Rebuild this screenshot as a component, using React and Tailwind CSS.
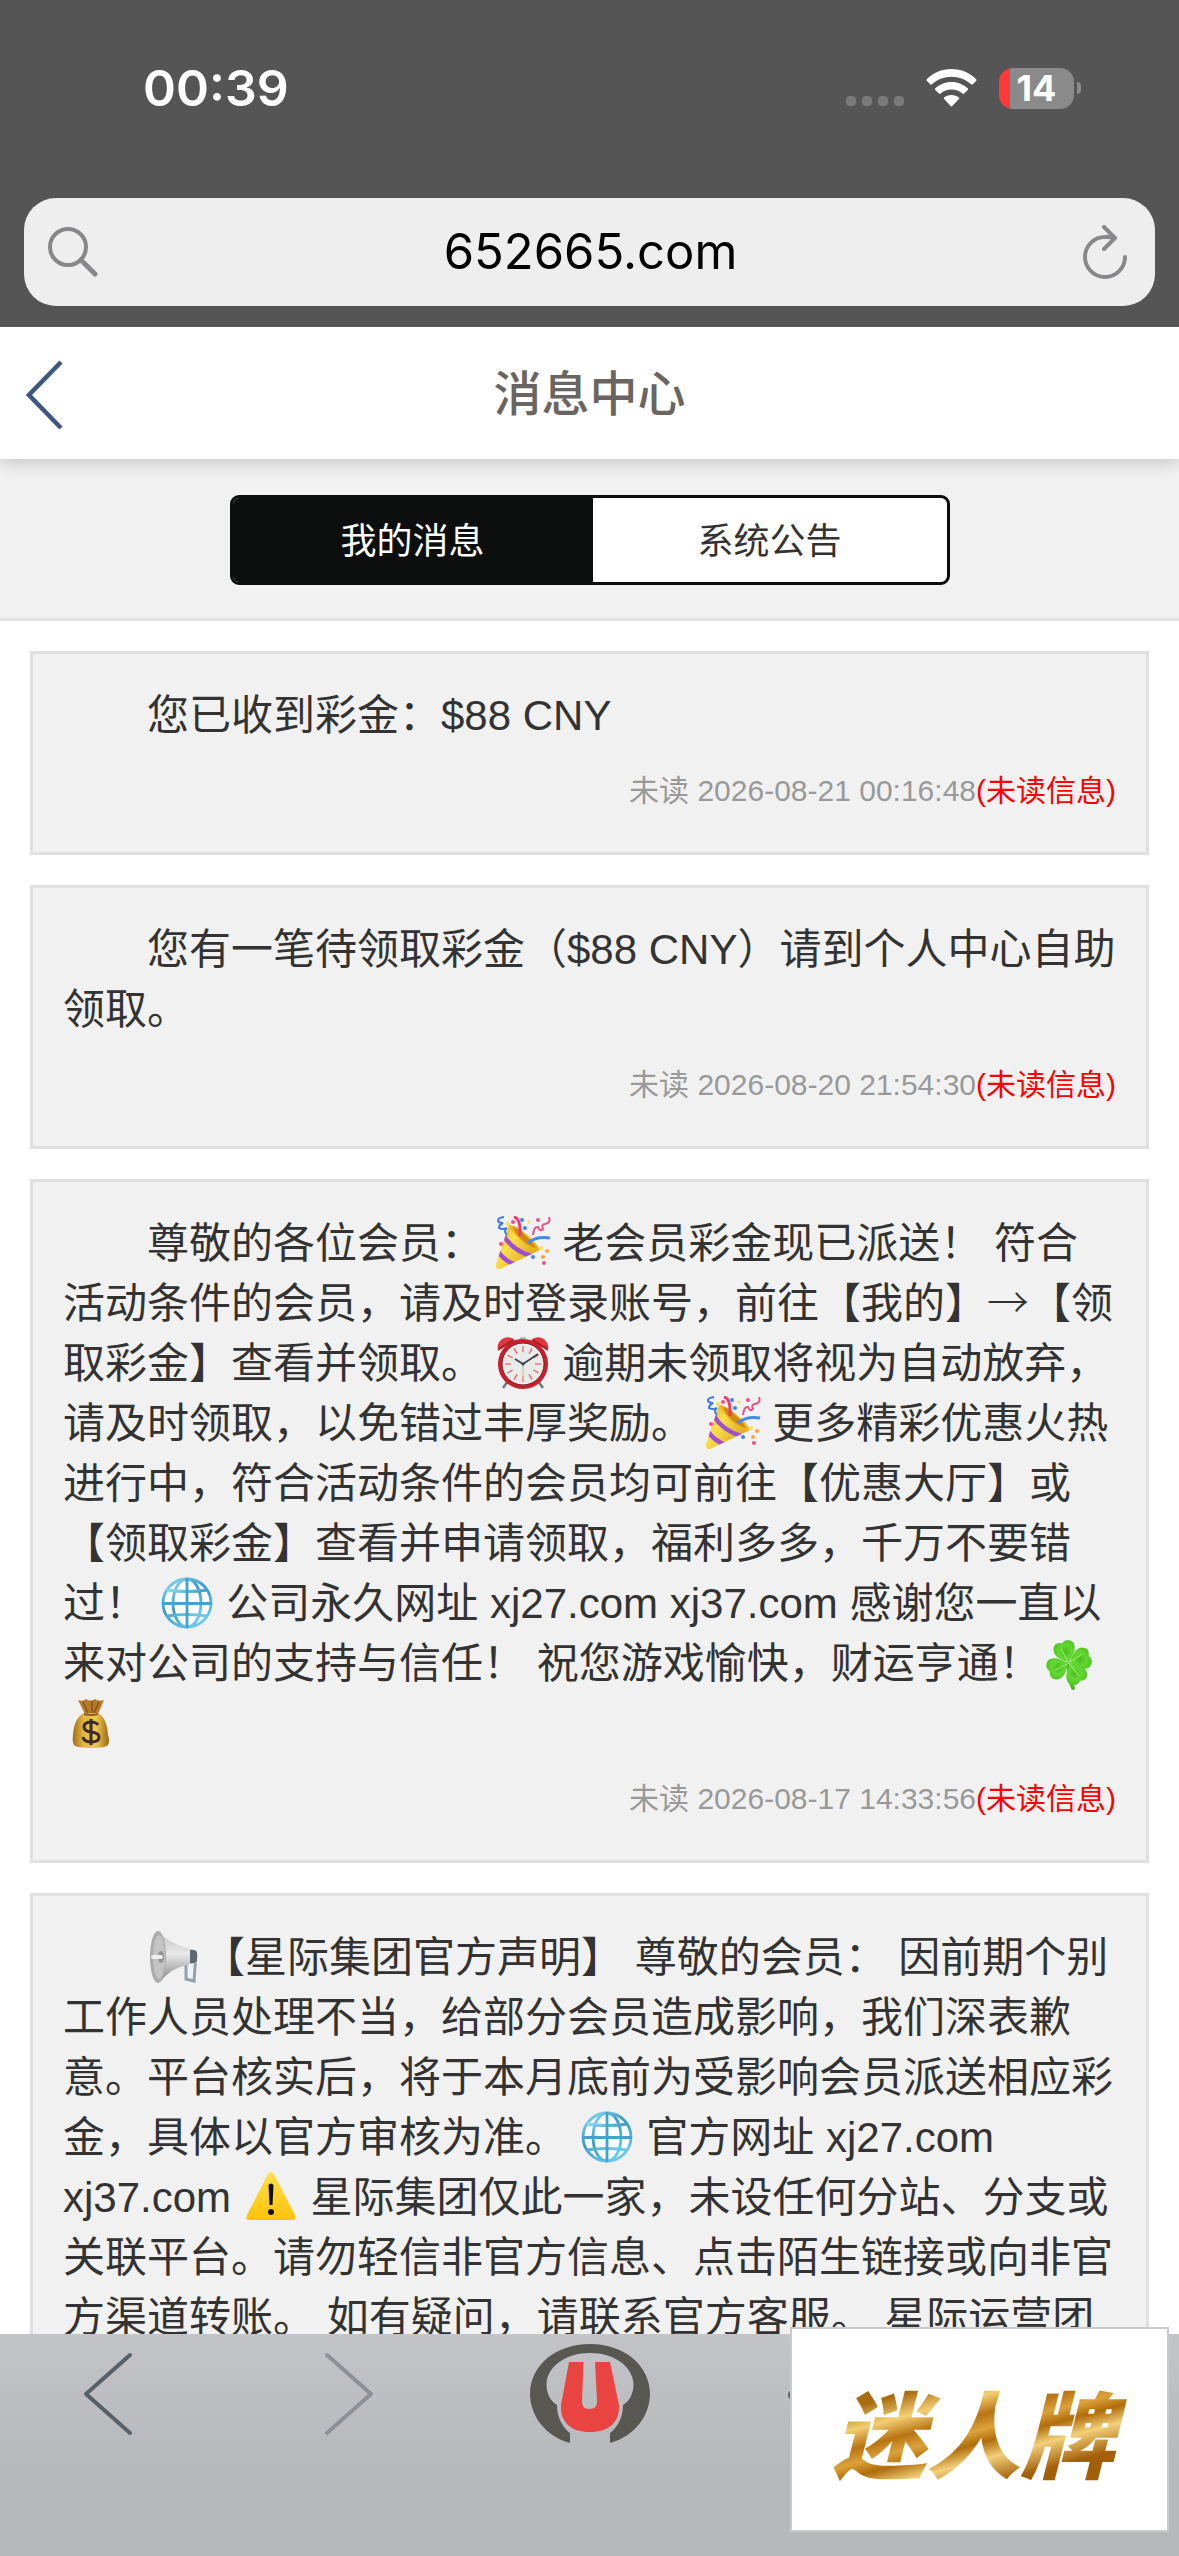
const emojiBox = "inline-block h-[54px] w-[56px] align-[-12px]";

function Emoji({ label, children }) {
  return (
    <svg viewBox="0 0 56 54" className={emojiBox} role="img" aria-label={label}>
      {children}
    </svg>
  );
}

function Party() {
  return (
    <Emoji label="庆祝">
      <defs>
        <linearGradient id="cone" x1="0" y1="0" x2="1" y2="0.7">
          <stop offset="0" stopColor="#d99a12" />
          <stop offset="0.4" stopColor="#fbe04e" />
          <stop offset="1" stopColor="#d99f14" />
        </linearGradient>
        <clipPath id="coneClip">
          <path d="M14 9 1 48Q0 54 5 53L45 34Q31 29 14 9Z" />
        </clipPath>
      </defs>
      <path d="M14 9 1 48Q0 54 5 53L45 34Q31 29 14 9Z" fill="url(#cone)" />
      <g clipPath="url(#coneClip)" fill="none" stroke="#a04fd0" strokeWidth="4.5">
        <path d="M9 20Q17 34 36 40" />
        <path d="M2 34Q9 45 21 49" />
      </g>
      <path d="M14 9Q20 8 32 19 45 30 44 34 38 37 27 26 15 14 14 9Z" fill="#eeb521" />
      <path d="M18 11Q24 12 31 20 39 27 41 32 35 31 27 24 20 17 18 11Z" fill="#cf8a12" />
      <path d="M19 1Q26 2 25 20" fill="none" stroke="#ef3b68" strokeWidth="3" />
      <path d="M33 27Q41 20 55 22" fill="none" stroke="#4589ee" strokeWidth="3" />
      <path d="M9 1Q2 2 3 5 4 7 8 7 4 9 4 12 8 14 12 12 8 15 12 19" fill="none" stroke="#3d78ea" strokeWidth="2" />
      <path d="M54 1Q56 7 50 8 46 8 48 13 45 16 43 11 39 10 38 19" fill="none" stroke="#ee4f83" strokeWidth="2" />
      <g fill="#3f86ee">
        <circle cx="27" cy="4" r="2" /><circle cx="30" cy="12" r="2" /><circle cx="38" cy="41" r="2" />
      </g>
      <g fill="#f0508c">
        <circle cx="43" cy="4" r="2" /><circle cx="6" cy="28" r="2" /><circle cx="49" cy="47" r="2" /><circle cx="18" cy="6" r="2" />
      </g>
      <g fill="#f9a43f">
        <circle cx="48" cy="41" r="2" /><circle cx="52" cy="35" r="2" />
      </g>
      <g fill="#fce04a">
        <circle cx="13" cy="8" r="2" /><circle cx="46" cy="32" r="2" /><circle cx="34" cy="6" r="1.5" />
      </g>
    </Emoji>
  );
}

function Alarm() {
  return (
    <Emoji label="闹钟">
      <path d="M13 45 8 52M43 45 48 52" stroke="#6d7a80" strokeWidth="2.5" />
      <rect x="25" y="1" width="6" height="4" fill="#b3bec4" />
      <path d="M3 15Q1 6 9 2 16 0 20 4Z" fill="#e0373f" />
      <path d="M53 15Q55 6 47 2 40 0 36 4Z" fill="#e0373f" />
      <path d="M4 13 18 4M52 13 38 4" stroke="#a51a26" strokeWidth="1.5" />
      <path d="M11 12 15 15M45 12 41 15" stroke="#7a1c22" strokeWidth="3" />
      <circle cx="28" cy="28" r="23" fill="#e9ebeb" stroke="#c5202b" strokeWidth="4" />
      <circle cx="28" cy="28" r="21" fill="none" stroke="#8e1a22" strokeWidth="1" />
      <g stroke="#f0595c" strokeWidth="1.2">
        {[0, 30, 60, 90, 120, 150, 180, 210, 240, 270, 300, 330].map((a) => (
          <path key={a} d="M28 10V16" transform={`rotate(${a} 28 28)`} />
        ))}
      </g>
      <path d="M28 28V43" stroke="#d9b77a" strokeWidth="1" />
      <path d="M20 23 28 28 43 18" fill="none" stroke="#39424a" strokeWidth="1.8" />
      <circle cx="28" cy="28" r="1.5" fill="#39424a" />
    </Emoji>
  );
}

function Globe() {
  return (
    <Emoji label="网站">
      <defs>
        <linearGradient id="globe" x1="0" y1="0" x2="0.6" y2="1">
          <stop offset="0" stopColor="#8fdcf5" />
          <stop offset="0.5" stopColor="#3798c4" />
          <stop offset="1" stopColor="#6cc7ea" />
        </linearGradient>
      </defs>
      <circle cx="28" cy="27" r="24.5" fill="#fbfdfe" />
      <g fill="none" stroke="url(#globe)" strokeWidth="2.8">
        <circle cx="28" cy="27" r="24" />
        <ellipse cx="28" cy="27" rx="14" ry="24" />
        <path d="M8 14Q28 17 48 14M8 40Q28 37 48 40" />
      </g>
      <path d="M28 2V52M3 27.5H53" stroke="#43a3ce" strokeWidth="2.8" />
    </Emoji>
  );
}

function Clover() {
  return (
    <Emoji label="四叶草">
      <defs>
        <radialGradient id="leaf">
          <stop offset="0" stopColor="#4aba1f" />
          <stop offset="0.6" stopColor="#62d833" />
          <stop offset="1" stopColor="#55c924" />
        </radialGradient>
      </defs>
      <path d="M28 27Q27 41 32 52" fill="none" stroke="#52b526" strokeWidth="4" strokeLinecap="round" />
      <g fill="url(#leaf)">
        {[-28, 62, 140, 238].map((a) => (
          <g key={a} transform={`rotate(${a} 28 27)`}>
            <path d="M28 26Q15 17 18 9 21 2 28 6 35 2 39 9 41 17 28 26Z" transform="rotate(8 28 27)" />
          </g>
        ))}
      </g>
      <path d="M28 27 20 13M28 27 41 18M28 27 38 40M28 27 14 34" stroke="#8ce95c" strokeWidth="1.3" />
    </Emoji>
  );
}

function MoneyBag() {
  return (
    <Emoji label="钱袋">
      <defs>
        <linearGradient id="bag">
          <stop offset="0" stopColor="#a36c1b" />
          <stop offset="0.3" stopColor="#e3b63f" />
          <stop offset="0.65" stopColor="#edc850" />
          <stop offset="1" stopColor="#9c6717" />
        </linearGradient>
      </defs>
      <path d="M15 4Q20 6 23 3 27 6 32 3 36 6 41 4L35 18H22Z" fill="#b57a2b" />
      <path d="M20 6 25 17M29 5V17M36 6 31 17" stroke="#7d4d15" strokeWidth="1.2" />
      <path d="M21 17Q11 22 10 39 9 45 11 49 13 52 28 52 43 52 45 49 47 45 45 39 44 22 35 17Z" fill="url(#bag)" />
      <path d="M21 18Q28 20 35 18" fill="none" stroke="#8d5b1c" strokeWidth="2" />
      <path d="M35 29Q33 26 28 26 21 26 21 31 21 35 28 36 36 37 36 41 36 46 28 46 21 46 20 41M28 23V49" fill="none" stroke="#3a2d26" strokeWidth="3" />
    </Emoji>
  );
}

function Loudspeaker() {
  return (
    <Emoji label="公告">
      <defs>
        <linearGradient id="horn" x1="0" y1="0" x2="0" y2="1">
          <stop offset="0" stopColor="#bdbdbd" />
          <stop offset="0.45" stopColor="#e9e9e9" />
          <stop offset="1" stopColor="#858585" />
        </linearGradient>
      </defs>
      <path d="M39 22V49L47 51 49 24" fill="none" stroke="#8ea3b1" strokeWidth="3" />
      <path d="M10 1Q20 12 40 18L50 21V32L40 35Q24 38 13 52Z" fill="url(#horn)" />
      <path d="M43 20Q48 19 50 22V31Q47 34 43 33Z" fill="#596873" />
      <ellipse cx="11" cy="27" rx="8" ry="26" fill="#aaabab" />
      <ellipse cx="12" cy="27" rx="6" ry="22" fill="#c4c4c4" />
      <ellipse cx="14" cy="27" rx="3" ry="6" fill="#929292" />
      <path d="M6 27H14" stroke="#eeeeee" strokeWidth="4" strokeLinecap="round" />
    </Emoji>
  );
}

function Warning() {
  return (
    <Emoji label="警告">
      <defs>
        <linearGradient id="warn" x1="0" y1="0" x2="0" y2="1">
          <stop offset="0" stopColor="#ffe04a" />
          <stop offset="1" stopColor="#ffc20a" />
        </linearGradient>
      </defs>
      <path d="M25 4Q28 0 31 4L52 45Q54 50 50 50H6Q2 50 4 45Z" fill="url(#warn)" />
      <path d="M25.5 15Q28 12 30.500 15L29.500 35H26.500Z" fill="#111" />
      <circle cx="28" cy="42" r="3" fill="#111" />
    </Emoji>
  );
}

function Message({ time, children }) {
  return (
    <article className="border-[3px] border-[#e0e0e0] bg-[#f1f1f1] px-[30px] pt-8 pb-[31px] text-[#333]">
      <p className="indent-[84px] text-[42px] leading-[60px]">{children}</p>
      {time && (
        <p className="mt-[15px] text-right text-[30px] leading-[60px] text-[#999]">
          未读 <time>{time}</time>
          <span className="text-[#f00]">(未读信息)</span>
        </p>
      )}
    </article>
  );
}

function StatusBar() {
  return (
    <div className="flex h-[198px] items-start justify-between pt-[58px] pr-[98px] pl-[143px] font-['Inter',sans-serif] font-semibold text-white">
      <span className="text-[50px] leading-[60px]">00:39</span>
      <div className="flex h-[60px] items-center">
        <div className="mt-[26px] mr-[22px] flex gap-[6px]">
          <i className="size-[10px] rounded-[4px] bg-[#7a7a7a]" />
          <i className="size-[10px] rounded-[4px] bg-[#7a7a7a]" />
          <i className="size-[10px] rounded-[4px] bg-[#7a7a7a]" />
          <i className="size-[10px] rounded-[4px] bg-[#7a7a7a]" />
        </div>
        <svg viewBox="0 0 51 38" className="mr-[22px] h-[38px] w-[51px]" fill="#fff" aria-label="Wi-Fi">
          <path d="M25.500 0C15.500 0 7 4 .8 10.200q-.8.800 0 1.600l3.400 3.500q.8.800 1.600 0C11 10.500 18 7.700 25.500 7.700s14.500 2.800 19.700 7.600q.8.800 1.600 0l3.400-3.500q.8-.8 0-1.600C44 4 35.500 0 25.500 0Z" />
          <path d="M25.500 13C19 13 13.500 15.500 9.300 19.300q-.8.800 0 1.600l3.600 3.700q.8.800 1.600 0c3-2.600 6.800-4 11-4s8 1.400 11 4q.8.800 1.600 0l3.600-3.700q.8-.8 0-1.600C37.500 15.500 32 13 25.500 13Z" />
          <path d="M25.500 26c-3 0-5.500 1-7.400 2.500q-.9.800 0 1.600l6.600 7q.8.800 1.600 0l6.600-7q.9-.8 0-1.600C31 27 28.500 26 25.500 26Z" />
        </svg>
        <div className="flex h-[41px] w-[75px] items-center justify-center rounded-[14px] bg-[linear-gradient(90deg,#ff383c_11px,#8a8a8a_11px)] text-[36px] leading-[41px] font-bold">
          14
        </div>
        <i className="ml-[3px] h-3 w-1 rounded-r-full bg-[#8a8a8a]" />
      </div>
    </div>
  );
}

function AddressBar() {
  return (
    <form className="mx-6 flex h-[108px] items-center justify-between rounded-[32px] bg-[#eee] px-6 text-[#88888b]" onSubmit={(e) => e.preventDefault()}>
      <svg viewBox="0 0 50 50" className="size-[50px]" fill="none" stroke="currentColor" strokeWidth="4" aria-hidden="true">
        <circle cx="20" cy="20" r="18" />
        <path d="m33 33 14 14" strokeWidth="5" strokeLinecap="round" />
      </svg>
      <input
        aria-label="网址"
        defaultValue="652665.com"
        className="min-w-0 flex-1 bg-transparent text-center font-['Inter',sans-serif] text-[49px] leading-[60px] text-black outline-none"
      />
      <button type="button" aria-label="刷新" className="mr-1">
        <svg viewBox="0 0 44 54" className="h-[54px] w-[44px]" fill="none" stroke="currentColor" strokeWidth="4" strokeLinecap="round" strokeLinejoin="round">
          <path d="M42 32A20 20 0 1 1 22 12Q27 11.500 31 13" />
          <path d="M21 2 32 13 21 24" />
        </svg>
      </button>
    </form>
  );
}

export default function App() {
  return (
    <div className="flex h-screen flex-col overflow-hidden bg-white font-['Liberation_Sans','Noto_Sans_CJK_SC',sans-serif]" lang="zh-CN">
      <header className="relative z-20 shrink-0 bg-[#555] pb-[21px]">
        <StatusBar />
        <AddressBar />
      </header>

      <nav className="relative z-10 grid h-[132px] shrink-0 grid-cols-[1fr_auto_1fr] items-center bg-white px-[26px] pt-1 shadow-[0_2px_18px_rgba(0,0,0,0.22)]">
        <button type="button" aria-label="返回" className="justify-self-start">
          <svg viewBox="0 0 38 70" className="h-[70px] w-[38px]" fill="none" stroke="#3f5681" strokeWidth="4.500">
            <path d="M35 2 3 35 35 68" />
          </svg>
        </button>
        <h1 className="text-[48px] font-medium leading-[60px] text-[#6a6463]">消息中心</h1>
      </nav>

      <div className="flex shrink-0 justify-center border-b-[3px] border-[#e3e3e3] bg-[#f1f1f1] pt-9 pb-[33px]">
        <div className="flex h-[90px] w-[720px] overflow-hidden rounded-[9px] border-[3px] border-[#0d0f0e] bg-white text-[36px]">
          <button type="button" className="w-[360px] bg-[#0d0f0e] pt-[3px] text-white">我的消息</button>
          <button type="button" className="flex-1 pt-[3px] text-[#333]">系统公告</button>
        </div>
      </div>

      <main className="flex min-h-0 flex-1 flex-col gap-[30px] overflow-hidden px-[30px] pt-[30px] *:shrink-0">
        <Message time="2026-08-21 00:16:48">您已收到彩金：$88 CNY</Message>
        <Message time="2026-08-20 21:54:30">您有一笔待领取彩金（$88 CNY）请到个人中心自助领取。</Message>
        <Message time="2026-08-17 14:33:56">
          尊敬的各位会员： <Party /> 老会员彩金现已派送！ 符合活动条件的会员，请及时登录账号，前往【我的】
          <span className="font-['Noto_Sans_CJK_SC',sans-serif] leading-none font-light">→</span>【领取彩金】查看并领取。 <Alarm />{" "}
          逾期未领取将视为自动放弃，请及时领取，以免错过丰厚奖励。 <Party />{" "}
          更多精彩优惠火热进行中，符合活动条件的会员均可前往【优惠大厅】或【领取彩金】查看并申请领取，福利多多，千万不要错过！ <Globe />{" "}
          公司永久网址 xj27.com xj37.com 感谢您一直以来对公司的支持与信任！ 祝您游戏愉快，财运亨通！<Clover /><MoneyBag />
        </Message>
        <Message>
          <Loudspeaker />【星际集团官方声明】 尊敬的会员： 因前期个别工作人员处理不当，给部分会员造成影响，我们深表歉意。平台核实后，将于本月底前为受影响会员派送相应彩金，具体以官方审核为准。 <Globe />{" "}
          官方网址 xj27.com xj37.com <Warning />{" "}
          星际集团仅此一家，未设任何分站、分支或关联平台。请勿轻信非官方信息、点击陌生链接或向非官方渠道转账。 如有疑问，请联系官方客服。 星际运营团
        </Message>
      </main>

      <footer className="relative h-[222px] shrink-0 bg-gradient-to-b from-[#c3c4c8] to-[#b7b8bc] to-60%">
        <div className="-mx-[13px] grid grid-cols-5 items-start justify-items-center">
          <button type="button" aria-label="后退" className="mt-[18px]">
            <svg viewBox="0 0 50 84" className="h-[84px] w-[50px]" fill="none" stroke="#566169" strokeWidth="4" strokeLinecap="round" strokeLinejoin="round">
              <path d="M47 3 3 42 47 81" />
            </svg>
          </button>
          <button type="button" aria-label="前进" className="mt-[18px]">
            <svg viewBox="0 0 50 84" className="h-[84px] w-[50px]" fill="none" stroke="#8d9196" strokeWidth="4" strokeLinecap="round" strokeLinejoin="round">
              <path d="M3 3 47 42 3 81" />
            </svg>
          </button>
          <button type="button" aria-label="主页" className="mt-[10px]">
            <svg viewBox="0 0 120 99" className="h-[99px] w-[120px]">
              <path d="M40 99C14 92 0 70 0 50 0 22 25 0 60 0S120 22 120 50C120 70 106 92 80 99V89C87 84 93 74 93 61 100 57 104 48 103.500 39 102 22 84 9 60 9S18 22 16.500 39C16 48 20 57 27 61 27 74 33 84 40 89Z" fill="#585751" />
              <path d="M39 18H53.500L52 57C52 62 54 65 59.500 65S67 62 67 57L65 18H80L89 61C90 78 79 88 60 88S30 78 31 61Z" fill="#e94442" />
            </svg>
          </button>
          <button type="button" aria-label="菜单" className="mt-[56px]">
            <svg viewBox="0 0 86 10" className="h-[10px] w-[86px]" fill="#566169">
              <circle cx="5" cy="5" r="5" /><circle cx="43" cy="5" r="5" /><circle cx="81" cy="5" r="5" />
            </svg>
          </button>
        </div>
        <a
          href="#promo"
          className="absolute right-[10px] bottom-6 flex h-[205px] w-[379px] items-center justify-center border-2 border-[#c9cacc] bg-white"
        >
          <span className="bg-[linear-gradient(165deg,#a96d10_20%,#f3cf72_32%,#b87412_42%,#dca23a_50%,#b06d0b_57%,#f2d07a_66%,#a35f08_80%)] bg-clip-text pr-3 font-['Noto_Sans_CJK_SC',sans-serif] text-[94px] leading-[110px] font-black text-transparent italic">
            迷人牌
          </span>
        </a>
      </footer>
    </div>
  );
}
